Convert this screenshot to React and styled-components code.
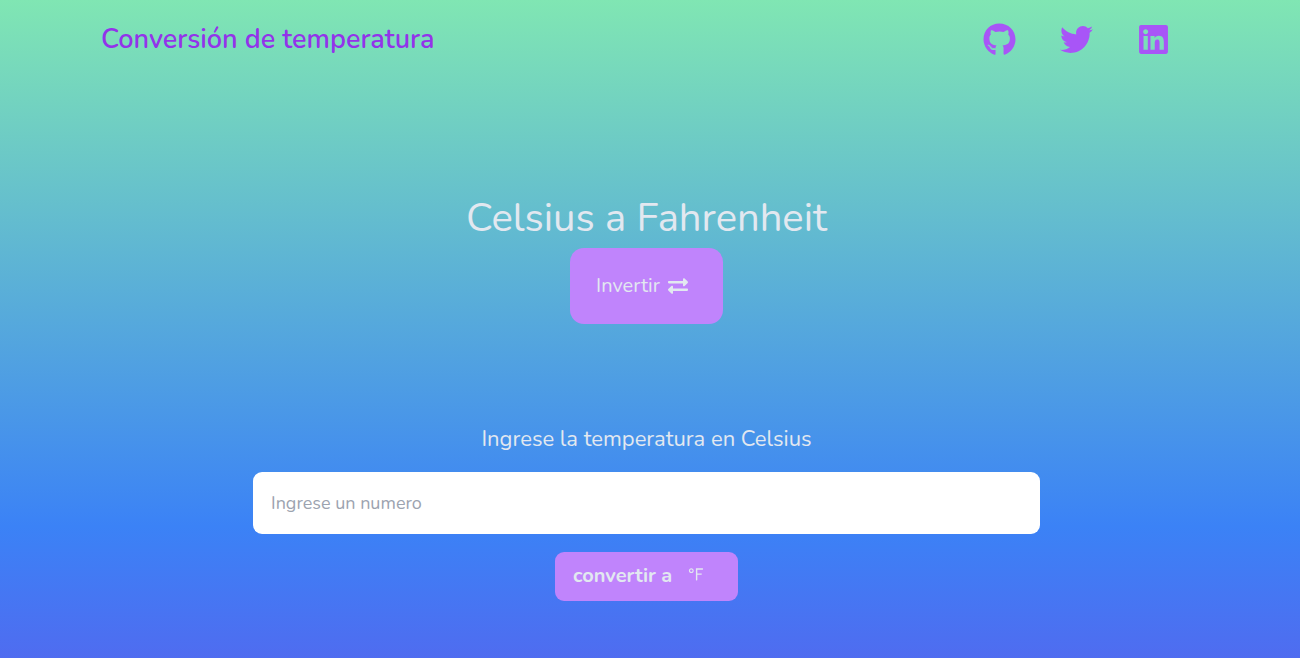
import React, { useState } from "react";
import styled, { createGlobalStyle } from "styled-components";
import { FaExchangeAlt, FaGithub, FaLinkedin, FaTwitter } from "react-icons/fa";
import { WiCelsius, WiFahrenheit } from "react-icons/wi";

const GlobalStyle = createGlobalStyle`
  *, *::before, *::after { box-sizing: border-box; }
  body {
    margin: 0;
    font-family: Nunito, Lato, "Noto Sans", sans-serif;
    color: #e2e8f0;
  }
`;

const Page = styled.div`
  min-height: 100vh;
  background: linear-gradient(to bottom, #80e6b3 0%, #3b82f6 80%, #4f6cf0 100%);
`;

const Header = styled.header`
  display: flex;
  align-items: center;
  justify-content: space-between;
  padding: 15px 130px 17px 101px;
`;

const Brand = styled.h1`
  margin: 0;
  padding-top: 2px;
  font-size: 27px;
  line-height: 46px;
  font-weight: 600;
  color: #9333ea;
`;

const Social = styled.nav`
  display: flex;
  gap: 44px;
`;

const SocialLink = styled.a`
  display: flex;
  color: #a855f7;
  font-size: 33px;
`;

const Main = styled.main`
  display: flex;
  flex-direction: column;
  align-items: center;
  padding: 112px 7px 56px 0;
`;

const Heading = styled.h2`
  margin: 0 0 4px;
  font-size: 40px;
  line-height: 52px;
  font-weight: 400;
`;

const Button = styled.button`
  display: flex;
  align-items: center;
  border: 0;
  background: #c084fc;
  color: inherit;
  font-family: inherit;
  font-size: 20px;
  cursor: pointer;
`;

const ButtonText = styled.span`
  padding-bottom: 2px;
`;

const InvertButton = styled(Button)`
  width: 153px;
  height: 76px;
  padding: 0 26px;
  gap: 8px;
  border-radius: 14px;
`;

const Form = styled.form`
  display: flex;
  flex-direction: column;
  align-items: center;
  width: 100%;
  margin-top: 100px;
`;

const Label = styled.label`
  font-size: 22px;
  line-height: 30px;
`;

const Field = styled.input`
  width: 100%;
  max-width: 787px;
  height: 62px;
  margin: 18px 0;
  padding: 0 18px;
  border: 0;
  border-radius: 9px;
  background: #fff;
  color: #1f2937;
  font-family: inherit;
  font-size: 18px;
  &::placeholder { color: #9ca3af; opacity: 1; }
`;

const ConvertButton = styled(Button)`
  width: 183px;
  height: 49px;
  padding: 0 18px 2px;
  gap: 4px;
  border-radius: 9px;
  font-weight: 700;

  svg { font-size: 40px; }
  ${ButtonText} { padding-bottom: 0; }
`;

export default function App() {
  const [celsius, setCelsius] = useState(true);
  const from = celsius ? "Celsius" : "Fahrenheit";
  const to = celsius ? "Fahrenheit" : "Celsius";
  return (
    <Page>
      <GlobalStyle />
      <Header>
        <Brand>Conversión de temperatura</Brand>
        <Social>
          <SocialLink href="#github" aria-label="GitHub"><FaGithub /></SocialLink>
          <SocialLink href="#twitter" aria-label="Twitter"><FaTwitter /></SocialLink>
          <SocialLink href="#linkedin" aria-label="LinkedIn"><FaLinkedin /></SocialLink>
        </Social>
      </Header>
      <Main>
        <Heading>{from} a {to}</Heading>
        <InvertButton type="button" onClick={() => setCelsius(!celsius)}>
          <ButtonText>Invertir</ButtonText>
          <FaExchangeAlt />
        </InvertButton>
        <Form onSubmit={(e) => e.preventDefault()}>
          <Label htmlFor="temperature">Ingrese la temperatura en {from}</Label>
          <Field id="temperature" placeholder="Ingrese un numero" />
          <ConvertButton type="submit">
            <ButtonText>convertir a</ButtonText>
            {celsius ? <WiFahrenheit /> : <WiCelsius />}
          </ConvertButton>
        </Form>
      </Main>
    </Page>
  );
}
